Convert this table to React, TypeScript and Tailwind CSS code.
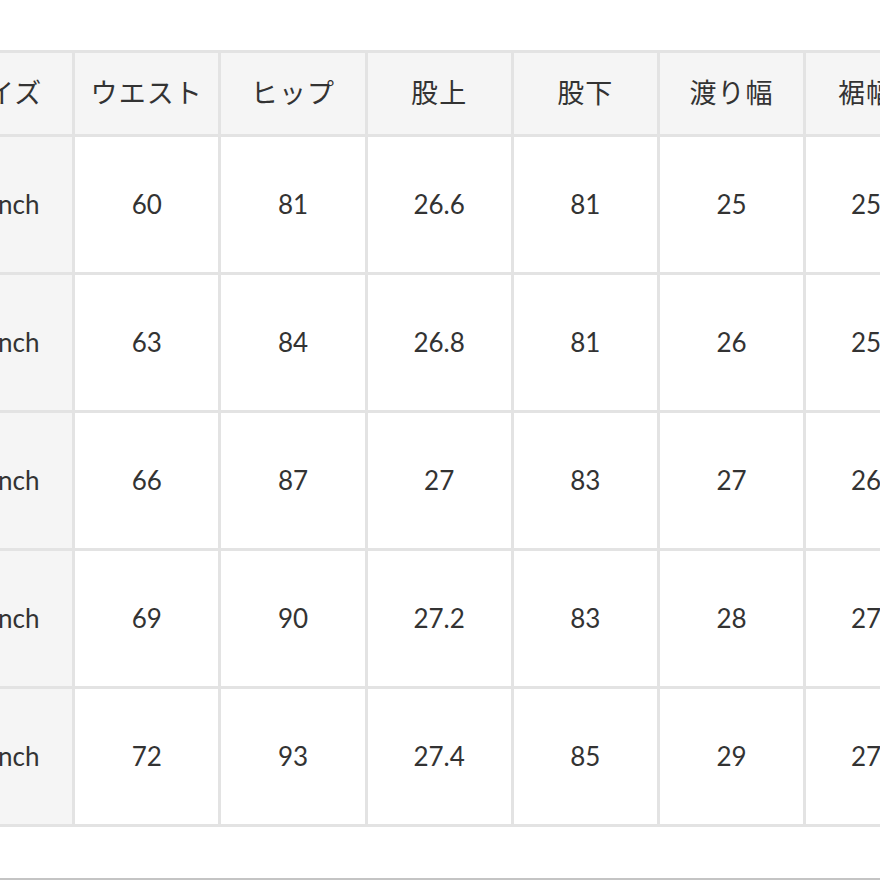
import React from 'react';

// Size chart: the first and last columns are cut by the viewport
const headers = ['サイズ', 'ウエスト', 'ヒップ', '股上', '股下', '渡り幅', '裾幅'];

const rows: (string | number)[][] = [
  ['24inch', 60, 81, '26.6', 81, 25, 25],
  ['25inch', 63, 84, '26.8', 81, 26, 25],
  ['26inch', 66, 87, 27, 83, 27, 26],
  ['27inch', 69, 90, '27.2', 83, 28, 27],
  ['28inch', 72, 93, '27.4', 85, 29, 27],
];

const font = { fontFamily: '"Lato", "Noto Sans CJK JP", sans-serif' };

export default function App() {
  return (
    <div className="w-[880px] h-[880px] overflow-hidden bg-white text-[#333]" style={font}>
      <div className="pt-[50px]">
        <div className="ml-[-74px] w-max p-[3px] bg-[#e3e3e3] grid grid-cols-[repeat(6,143.2px)_120px] grid-rows-[81px_repeat(5,135px)] gap-[3px]">
          {headers.map((h) => (
            <div key={h} className="bg-[#f5f5f5] flex items-center justify-center text-[27px] tracking-[0.04em]">
              {h}
            </div>
          ))}
          {rows.map((row, r) =>
            row.map((cell, c) => (
              <div
                key={`${r}-${c}`}
                className={`${c === 0 ? 'bg-[#f5f5f5]' : 'bg-white'} flex items-center justify-center text-[26px]`}
              >
                {cell}
              </div>
            ))
          )}
        </div>
        <div className="mt-[51px] h-[2px] bg-[#c4c4c4]" />
      </div>
    </div>
  );
}
